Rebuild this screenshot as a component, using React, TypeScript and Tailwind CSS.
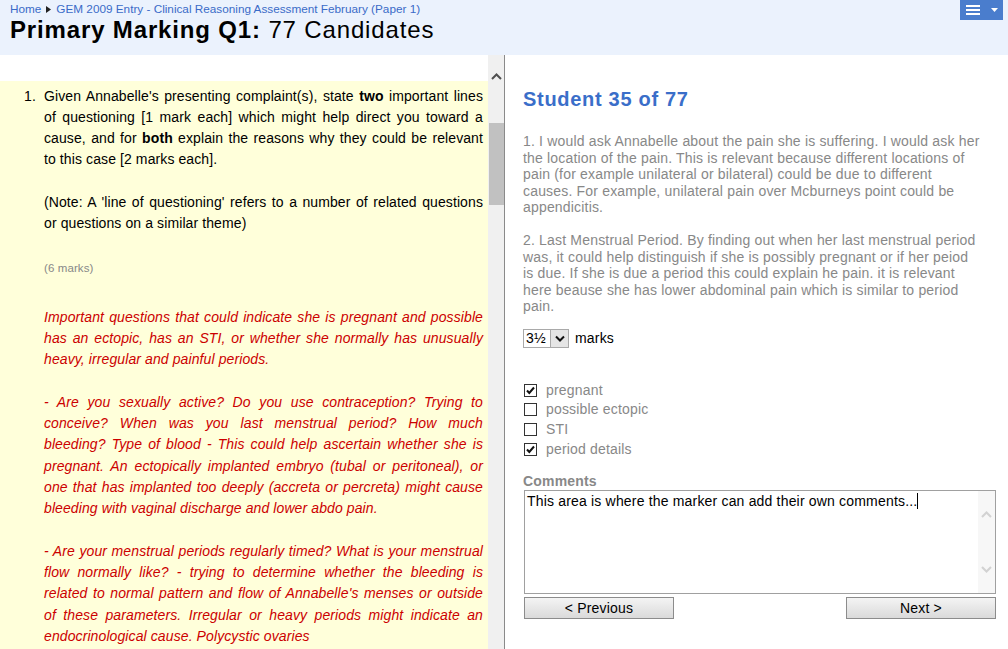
import React from 'react';

const FONT = "font-['Liberation_Sans',Arial,sans-serif]";

// a line that is stretched to the full column width
function J({ children }: { children: React.ReactNode }) {
  return <span className="block text-justify [text-align-last:justify]">{children}</span>;
}

function L({ children }: { children: React.ReactNode }) {
  return <span className="block">{children}</span>;
}

function CheckBox({ checked }: { checked: boolean }) {
  return (
    <div className="w-[13px] h-[13px] border border-[#333333] bg-white flex items-center justify-center">
      {checked && (
        <svg width="11" height="11" viewBox="0 0 11 11">
          <path d="M2 5.5 L4.3 8 L9 2.5" fill="none" stroke="#111" strokeWidth="2" />
        </svg>
      )}
    </div>
  );
}

function Chevron({ up, color }: { up: boolean; color: string }) {
  return (
    <svg width="11" height="7" viewBox="0 0 11 7">
      <path
        d={up ? 'M1 6 L5.5 1.5 L10 6' : 'M1 1 L5.5 5.5 L10 1'}
        fill="none"
        stroke={color}
        strokeWidth="2"
      />
    </svg>
  );
}

export default function App() {
  const criteria = [
    { label: 'pregnant', checked: true },
    { label: 'possible ectopic', checked: false },
    { label: 'STI', checked: false },
    { label: 'period details', checked: true },
  ];

  return (
    <div className={`${FONT} h-screen w-full flex flex-col bg-white overflow-hidden`}>
      {/* header */}
      <header className="h-[55px] shrink-0 bg-[#ebf2fd] flex justify-between">
        <div className="pl-[10px] pt-[2px]">
          <div className="text-[11.75px] leading-[14px] text-[#3a6bc8] flex items-center">
            <span>Home</span>
            <svg width="5" height="7" viewBox="0 0 5 7" className="mx-[5px]">
              <path d="M0 0 L5 3.5 L0 7 Z" fill="#222" />
            </svg>
            <span>GEM 2009 Entry - Clinical Reasoning Assessment February (Paper 1)</span>
          </div>
          <h1 className="text-[24px] leading-[28px] tracking-[0.85px] text-black">
            <span className="font-bold">Primary Marking Q1:</span> 77 Candidates
          </h1>
        </div>
        <button className="mr-[5px] w-[43px] h-[20px] bg-[#4a7dcd] flex items-center pl-[6px] gap-[11px]">
          <div className="flex flex-col gap-[2px]">
            <div className="w-[14px] h-[2px] bg-white" />
            <div className="w-[14px] h-[2px] bg-white" />
            <div className="w-[14px] h-[2px] bg-white" />
          </div>
          <svg width="7" height="4" viewBox="0 0 7 4">
            <path d="M0 0 L7 0 L3.5 4 Z" fill="white" />
          </svg>
        </button>
      </header>

      <div className="flex flex-1 min-h-0">
        {/* question pane */}
        <div className="w-[488px] shrink-0 overflow-hidden pt-[26px]">
          <div className="bg-[#ffffda] h-full pt-[4.5px] flex text-[14px] leading-[21.3px] tracking-[0.1px] text-black">
            <div className="w-[44px] shrink-0 text-right pr-[8px]">1.</div>
            <div className="w-[439px]">
              <p>
                <J>Given Annabelle's presenting complaint(s), state <b>two</b> important lines</J>
                <J>of questioning [1 mark each] which might help direct you toward a</J>
                <J>cause, and for <b>both</b> explain the reasons why they could be relevant</J>
                <L>to this case [2 marks each].</L>
              </p>
              <p className="mt-[21.3px]">
                <J>(Note: A 'line of questioning' refers to a number of related questions</J>
                <L>or questions on a similar theme)</L>
              </p>
              <p className="mt-[23px] text-[11.5px] leading-[21px] text-[#888888]">(6 marks)</p>
              <div className="mt-[28px] italic text-[#cc0000]">
                <p>
                  <J>Important questions that could indicate she is pregnant and possible</J>
                  <J>has an ectopic, has an STI, or whether she normally has unusually</J>
                  <L>heavy, irregular and painful periods.</L>
                </p>
                <p className="mt-[21.3px]">
                  <J>- Are you sexually active? Do you use contraception? Trying to</J>
                  <J>conceive? When was you last menstrual period? How much</J>
                  <J>bleeding? Type of blood - This could help ascertain whether she is</J>
                  <J>pregnant. An ectopically implanted embryo (tubal or peritoneal), or</J>
                  <J>one that has implanted too deeply (accreta or percreta) might cause</J>
                  <L>bleeding with vaginal discharge and lower abdo pain.</L>
                </p>
                <p className="mt-[21.3px]">
                  <J>- Are your menstrual periods regularly timed? What is your menstrual</J>
                  <J>flow normally like? - trying to determine whether the bleeding is</J>
                  <J>related to normal pattern and flow of Annabelle's menses or outside</J>
                  <J>of these parameters. Irregular or heavy periods might indicate an</J>
                  <L>endocrinological cause. Polycystic ovaries</L>
                </p>
              </div>
            </div>
          </div>
        </div>

        {/* pane scrollbar */}
        <div className="w-[16px] shrink-0 bg-[#f0f0f0] flex flex-col items-center">
          <div className="h-[68px] flex items-start pt-[18px]">
            <Chevron up color="#505050" />
          </div>
          <div className="w-[15px] h-[82px] bg-[#c1c1c1]" />
        </div>
        <div className="w-px shrink-0 bg-[#8a8a8a]" />

        {/* marking pane */}
        <div className="flex-1 pl-[18px] pr-[12px] pt-[32px] text-[14px] tracking-[0.18px]">
          <h2 className="text-[20px] leading-[24px] tracking-[0.7px] font-bold text-[#3a6ec9]">Student 35 of 77</h2>
          <div className="mt-[22px] text-[#888888] leading-[16.5px]">
            <p>
              1. I would ask Annabelle about the pain she is suffering. I would ask her<br />
              the location of the pain. This is relevant because different locations of<br />
              pain (for example unilateral or bilateral) could be due to different<br />
              causes. For example, unilateral pain over Mcburneys point could be<br />
              appendicitis.
            </p>
            <p className="mt-[16.5px]">
              2. Last Menstrual Period. By finding out when her last menstrual period<br />
              was, it could help distinguish if she is possibly pregnant or if her peiod<br />
              is due. If she is due a period this could explain he pain. it is relevant<br />
              here beause she has lower abdominal pain which is similar to period<br />
              pain.
            </p>
          </div>

          <div className="mt-[14px] flex items-center gap-[6px] h-[19px]">
            <div className="h-[19px] w-[46px] border border-[#a9a9a9] bg-white flex items-center">
              <span className="pl-[2px] w-[26px] leading-[17px] text-black">3½</span>
              <div className="h-[17px] w-[18px] bg-[#e5e5e5] border-l border-[#a9a9a9] flex items-center justify-center">
                <svg width="10" height="7" viewBox="0 0 10 7">
                  <path d="M1 1.5 L5 5.5 L9 1.5" fill="none" stroke="#111" strokeWidth="2" />
                </svg>
              </div>
            </div>
            <span className="text-black leading-[17px]">marks</span>
          </div>

          <div className="mt-[33px] flex flex-col">
            {criteria.map((c) => (
              <label key={c.label} className="h-[19.6px] flex items-center gap-[9px] pl-px text-[#888888]">
                <CheckBox checked={c.checked} />
                <span>{c.label}</span>
              </label>
            ))}
          </div>

          <div className="mt-[14px] leading-[16px] font-bold text-[#888888]">Comments</div>
          <div className="mt-px ml-px w-[472px] h-[104px] border border-[#a0a0a0] bg-white flex">
            <div className="flex-1 pl-[2px] pt-[2px] text-black leading-[16px]">
              This area is where the marker can add their own comments...
              <span className="inline-block w-px h-[16px] bg-black align-[-3px]" />
            </div>
            <div className="w-[17px] bg-[#f7f7f7] flex flex-col items-center justify-between pt-[20px] pb-[20px]">
              <Chevron up color="#d2d2d2" />
              <Chevron up={false} color="#d2d2d2" />
            </div>
          </div>
          <div className="mt-[3px] ml-px w-[472px] flex justify-between">
            <button className="w-[150px] h-[22px] border border-[#8c8c8c] bg-gradient-to-b from-[#f4f4f4] to-[#dadada] text-black text-[14px] leading-[20px]">
              &lt; Previous
            </button>
            <button className="w-[150px] h-[22px] border border-[#8c8c8c] bg-gradient-to-b from-[#f4f4f4] to-[#dadada] text-black text-[14px] leading-[20px]">
              Next &gt;
            </button>
          </div>
        </div>
      </div>
    </div>
  );
}
